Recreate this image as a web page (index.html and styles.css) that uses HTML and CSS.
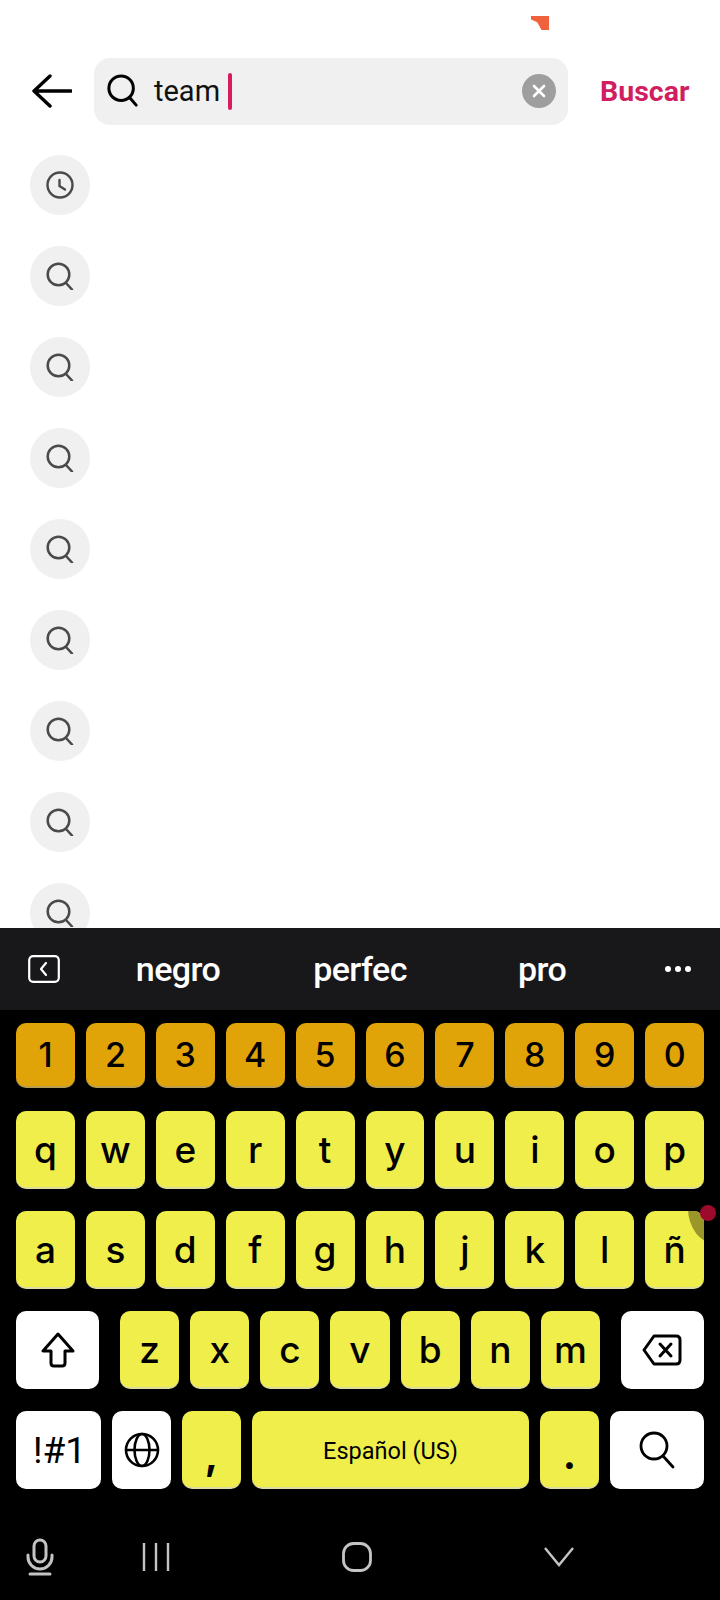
FILE: index.html
```html
<!DOCTYPE html>
<html lang="es">
<head>
    <meta charset="UTF-8">
    <title>Buscar</title>
    <link rel="stylesheet" href="styles.css">
</head>
<body>
    <div class="screen">
        <div class="app">
            <div class="corner-mark"></div>
            <div class="search-header">
                <svg class="back-icon" viewBox="0 0 40 34"><path d="M39 17H3M18 2 2 17l16 15" fill="none" stroke="#000" stroke-width="3.4" stroke-linecap="round" stroke-linejoin="round"/></svg>
                <div class="search-box">
                    <svg class="box-icon" viewBox="0 0 34 36"><circle cx="15" cy="15" r="13" fill="none" stroke="#000" stroke-width="3.2"/><path d="M24 25l7 8" stroke="#000" stroke-width="3.2" stroke-linecap="round"/></svg>
                    <span class="search-text">team</span>
                    <span class="caret"></span>
                    <span class="clear-btn"><svg viewBox="0 0 14 14"><path d="M2 2l10 10M12 2 2 12" stroke="#fff" stroke-width="2.6" stroke-linecap="round"/></svg></span>
                </div>
                <span class="search-action">Buscar</span>
            </div>
            <div class="history">
                <div class="history-item"><svg viewBox="0 0 28 28"><circle cx="14" cy="14" r="12.5" fill="none" stroke="#4a4a4a" stroke-width="2.4"/><path d="M13.5 9v6l5.5 3.5" fill="none" stroke="#4a4a4a" stroke-width="2.4" stroke-linecap="round"/></svg></div>
                <div class="history-item"><svg viewBox="0 0 28 28"><use href="#lens"/></svg></div>
                <div class="history-item"><svg viewBox="0 0 28 28"><use href="#lens"/></svg></div>
                <div class="history-item"><svg viewBox="0 0 28 28"><use href="#lens"/></svg></div>
                <div class="history-item"><svg viewBox="0 0 28 28"><use href="#lens"/></svg></div>
                <div class="history-item"><svg viewBox="0 0 28 28"><use href="#lens"/></svg></div>
                <div class="history-item"><svg viewBox="0 0 28 28"><use href="#lens"/></svg></div>
                <div class="history-item"><svg viewBox="0 0 28 28"><use href="#lens"/></svg></div>
                <div class="history-item"><svg viewBox="0 0 28 28"><use href="#lens"/></svg></div>
            </div>
        </div>

        <div class="keyboard">
            <div class="suggestions">
                <svg class="toolbar-icon" viewBox="0 0 32 28"><rect x="1.2" y="1.2" width="29.6" height="25.6" rx="4" fill="none" stroke="#fff" stroke-width="2.2"/><path d="M18 8l-5 6 5 6" fill="none" stroke="#fff" stroke-width="2.2" stroke-linecap="round" stroke-linejoin="round"/></svg>
                <span class="word word-a">negro</span>
                <span class="word word-b">perfec</span>
                <span class="word word-c">pro</span>
                <span class="more-dots"><i></i><i></i><i></i></span>
            </div>
            <div class="keys">
                <div class="row row-numbers">
                    <span class="key num">1</span><span class="key num">2</span><span class="key num">3</span><span class="key num">4</span><span class="key num">5</span><span class="key num">6</span><span class="key num">7</span><span class="key num">8</span><span class="key num">9</span><span class="key num">0</span>
                </div>
                <div class="row">
                    <span class="key">q</span><span class="key">w</span><span class="key">e</span><span class="key">r</span><span class="key">t</span><span class="key">y</span><span class="key">u</span><span class="key">i</span><span class="key">o</span><span class="key">p</span>
                </div>
                <div class="row">
                    <span class="key">a</span><span class="key">s</span><span class="key">d</span><span class="key">f</span><span class="key">g</span><span class="key">h</span><span class="key">j</span><span class="key">k</span><span class="key">l</span>
                    <span class="key key-n">ñ<span class="touch-shade"></span></span>
                </div>
                <div class="row">
                    <span class="key fn wide shift"><svg viewBox="0 0 34 36" width="34" height="36"><path d="M17 2 2 19h8v12q0 3 3 3h8q3 0 3-3V19h8z" fill="none" stroke="#000" stroke-width="3" stroke-linejoin="round"/></svg></span>
                    <span class="key">z</span><span class="key">x</span><span class="key">c</span><span class="key">v</span><span class="key">b</span><span class="key">n</span><span class="key">m</span>
                    <span class="key fn wide del"><svg viewBox="0 0 40 32" width="40" height="32"><path d="M12 2h22q4 0 4 4v20q0 4-4 4H12L2 16z" fill="none" stroke="#000" stroke-width="3" stroke-linejoin="round"/><path d="M18 10l11 12M29 10 18 22" stroke="#000" stroke-width="3" stroke-linecap="round"/></svg></span>
                </div>
                <div class="row">
                    <span class="key fn sym">!#1</span>
                    <span class="key fn small"><svg viewBox="0 0 36 36" width="36" height="36"><g fill="none" stroke="#000" stroke-width="2.6"><circle cx="18" cy="18" r="16"/><ellipse cx="18" cy="18" rx="7.5" ry="16"/><path d="M2 18h32"/></g></svg></span>
                    <span class="key small punct">,</span>
                    <span class="key space">Español (US)</span>
                    <span class="key small punct">.</span>
                    <span class="key fn go"><svg viewBox="0 0 36 38" width="36" height="38"><circle cx="15" cy="15" r="13" fill="none" stroke="#000" stroke-width="2.8"/><path d="M24 25l10 11" stroke="#000" stroke-width="2.8" stroke-linecap="round"/></svg></span>
                </div>
            </div>
            <div class="navbar">
                <svg class="nav-mic" viewBox="0 0 30 38" width="30" height="38"><g fill="none" stroke="#c4c4c4" stroke-width="3" stroke-linecap="round"><rect x="9" y="2" width="12" height="22" rx="6"/><path d="M3 17v2a12 12 0 0 0 24 0v-2"/><path d="M5 36h20"/></g></svg>
                <svg class="nav-recents" viewBox="0 0 28 30" width="28" height="30"><path d="M2 1v28M14 1v28M26 1v28" stroke="#c4c4c4" stroke-width="2.4"/></svg>
                <svg class="nav-home" viewBox="0 0 30 30" width="30" height="30"><rect x="1.5" y="1.5" width="27" height="27" rx="10" fill="none" stroke="#c4c4c4" stroke-width="2.8"/></svg>
                <svg class="nav-down" viewBox="0 0 30 20" width="30" height="20"><path d="M1 1l14 17L29 1" fill="none" stroke="#c4c4c4" stroke-width="2.4"/></svg>
            </div>
            <div class="touch-dot"></div>
        </div>
    </div>

    <!-- lupa de las sugerencias -->
    <svg class="defs" width="0" height="0"><defs><g id="lens"><circle cx="12.5" cy="12.5" r="10.8" fill="none" stroke="#4a4a4a" stroke-width="2.5"/><path d="M20 21l6 6.5" stroke="#4a4a4a" stroke-width="2.5" stroke-linecap="round"/></g></defs></svg>
</body>
</html>
```

FILE: styles.css
```css
* {
    box-sizing: border-box;
}

body {
    margin: 0;
    background: #000;
    font-family: "Inter", "Liberation Sans", sans-serif;
}

.screen {
    width: 720px;
    height: 1600px;
    display: flex;
    flex-direction: column;
    overflow: hidden;
}

.app {
    position: relative;
    height: 928px;
    background: #fff;
    overflow: hidden;
    padding-top: 57px;
}

.corner-mark {
    position: absolute;
    left: 531px;
    top: 16px;
    width: 18px;
    height: 14px;
    background: #f0623c;
    clip-path: polygon(0 0, 100% 0, 100% 100%, 58% 100%, 35% 45%, 0 25%);
}

.search-header {
    display: flex;
    align-items: center;
    height: 68px;
    padding-left: 32px;
}

.back-icon {
    width: 40px;
    height: 34px;
    margin-right: 22px;
}

.search-box {
    width: 474px;
    height: 67px;
    display: flex;
    align-items: center;
    padding: 0 12px 0 13px;
    background: #f0f0f0;
    border-radius: 16px;
}

.box-icon {
    width: 32px;
    height: 34px;
    margin-right: 15px;
}

.search-text {
    font-family: "Roboto", sans-serif;
    font-size: 29px;
    color: #111;
}

.caret {
    width: 4px;
    height: 37px;
    margin-left: 8px;
    background: #d81b60;
    border-radius: 2px;
}

.clear-btn {
    width: 34px;
    height: 34px;
    margin-left: auto;
    display: flex;
    align-items: center;
    justify-content: center;
    background: #9e9e9e;
    border-radius: 50%;
}

.clear-btn svg {
    width: 14px;
    height: 14px;
}

.search-action {
    margin-left: 32px;
    font-family: "Roboto", sans-serif;
    font-weight: 700;
    font-size: 28.5px;
    color: #d01e60;
}

.history {
    display: flex;
    flex-direction: column;
    gap: 31px;
    padding: 30px 0 0 30px;
}

.history-item {
    width: 60px;
    height: 60px;
    flex-shrink: 0;
    display: flex;
    align-items: center;
    justify-content: center;
    background: #f0f0f0;
    border-radius: 50%;
}

.history-item svg {
    width: 28px;
    height: 28px;
}

.defs {
    position: absolute;
}

.keyboard {
    position: relative;
    flex: 1;
    background: #000;
}

.suggestions {
    position: relative;
    height: 82px;
    display: flex;
    align-items: center;
    background: #18181a;
    color: #fff;
    font-family: "Roboto", sans-serif;
    font-size: 34px;
    font-weight: 500;
    letter-spacing: -0.6px;
}

.toolbar-icon {
    width: 32px;
    height: 28px;
    margin-left: 28px;
}

.word {
    position: absolute;
    top: 50%;
    transform: translate(-50%, -50%);
}

.word-a { left: 178px; }
.word-b { left: 360px; }
.word-c { left: 542px; }

.more-dots {
    margin-left: auto;
    margin-right: 29px;
    display: flex;
    gap: 4px;
}

.more-dots i {
    width: 6px;
    height: 6px;
    background: #fff;
    border-radius: 50%;
}

.keys {
    display: flex;
    flex-direction: column;
    gap: 22px;
    padding: 13px 16px 0;
}

.row {
    display: flex;
    gap: 11px;
    height: 78px;
}

.row-numbers {
    height: 65px;
    margin-bottom: 1px;
}

.key {
    position: relative;
    flex: 1 1 0;
    min-width: 0;
    display: flex;
    align-items: center;
    justify-content: center;
    overflow: hidden;
    background: #efee4a;
    border-bottom: 2px solid #dcdba0;
    border-radius: 10px;
    color: #000;
    font-size: 37px;
    font-weight: 550;
}

.key.num {
    background: #e0a408;
    border-bottom-color: #b89c50;
    font-size: 34px;
    font-weight: 500;
}

.key.fn {
    background: #fff;
    border-bottom: 0;
}

.key.wide {
    flex: 0 0 83px;
}

.shift {
    margin-right: 10px;
}

.del {
    margin-left: 10px;
}

.key.sym {
    flex: 0 0 85px;
    padding-left: 2px;
    font-family: "Roboto", sans-serif;
    font-weight: 400;
    font-size: 37px;
}

.key.small {
    flex: 0 0 59px;
}

.key.punct {
    align-items: flex-end;
    padding-bottom: 12px;
    font-weight: 700;
    font-size: 40px;
    line-height: 40px;
}

.key.space {
    flex: 1 1 0;
    padding-top: 3px;
    font-family: "Roboto", sans-serif;
    font-weight: 400;
    font-size: 23.5px;
}

.key.go {
    flex: 0 0 94px;
}

.touch-shade {
    position: absolute;
    left: 43px;
    top: -39px;
    width: 56px;
    height: 72px;
    background: #9a962a;
    border-radius: 50%;
}

.touch-dot {
    position: absolute;
    left: 700px;
    top: 277px;
    width: 16px;
    height: 16px;
    background: #9c0a2c;
    border-radius: 50%;
}

.navbar {
    position: absolute;
    left: 0;
    right: 0;
    top: 609px;
    height: 40px;
}

.navbar svg {
    position: absolute;
    top: 50%;
    transform: translateY(-50%);
}

.nav-mic { left: 25px; }
.nav-recents { left: 142px; }
.nav-home { left: 342px; }
.nav-down { left: 544px; }
```
